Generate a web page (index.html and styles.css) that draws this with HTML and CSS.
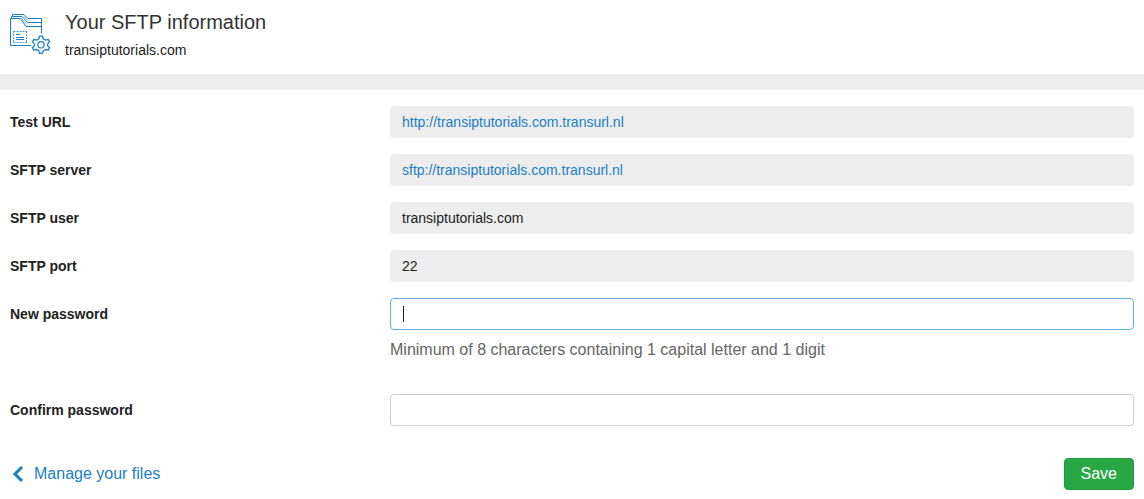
FILE: index.html
```html
<!doctype html>
<html lang="en">
  <head>
    <meta charset="UTF-8">
    <meta content="width=device-width, initial-scale=1.0" name="viewport">
    <title>Your SFTP information</title>
    <link rel="stylesheet" href="styles.css">
  </head>
  <body>
    <header class="page-header">
      <svg class="page-icon" viewBox="0 0 42 42" fill="none" stroke="#1b7fc4" aria-hidden="true">
        <path d="M22 33.500H1.500V6.500H11.500L17 14.500H32.500V21.500"/>
        <path d="M2.500 6V4.500H13L18.500 10.500H32.500"/>
        <path d="M3.500 4V2.500H15L19 6.500H32.500V14.500"/>
        <path d="M12 6L18 12.500M14 3.500L19 8.500" stroke-opacity=".6"/>
        <path d="M4.500 19.500H18M4.500 30.500H18M4.500 19V31M17.500 19V31" stroke-dasharray="2 1" stroke-opacity=".8"/>
        <path d="M7 22.500H11M7 25.500H15M7 27.500H15"/>
        <path d="M30.500 24.200h3l.8 2.800 2.200 1.100 2.700-.7 1.300 2.500-1.800 2v1.800l1.800 2-1.300 2.500-2.700-.7-2.200 1.100-.8 2.800h-3l-.8-2.800-2.200-1.100-2.700.7-1.300-2.500 1.800-2v-1.800l-1.800-2 1.300-2.500 2.700.7 2.200-1.100z" stroke-width="1.300" stroke-linejoin="round"/>
        <circle cx="32" cy="32.800" r="3.200" stroke-width="1.200"/>
      </svg>
      <div>
        <h1>Your SFTP information</h1>
        <p>transiptutorials.com</p>
      </div>
    </header>
    <main>
      <form>
        <dl class="details">
          <div class="row">
            <dt>Test URL</dt>
            <dd><a href="http://transiptutorials.com.transurl.nl">http://transiptutorials.com.transurl.nl</a></dd>
          </div>
          <div class="row">
            <dt>SFTP server</dt>
            <dd><a href="sftp://transiptutorials.com.transurl.nl">sftp://transiptutorials.com.transurl.nl</a></dd>
          </div>
          <div class="row">
            <dt>SFTP user</dt>
            <dd>transiptutorials.com</dd>
          </div>
          <div class="row">
            <dt>SFTP port</dt>
            <dd>22</dd>
          </div>
        </dl>
        <div class="row row-help">
          <label for="new-password">New password</label>
          <div>
            <input type="password" id="new-password" name="new-password" placeholder=" " aria-describedby="password-help" autofocus>
            <p class="help" id="password-help">Minimum of 8 characters containing 1 capital letter and 1 digit</p>
          </div>
        </div>
        <div class="row">
          <label for="confirm-password">Confirm password</label>
          <input type="password" id="confirm-password" name="confirm-password" placeholder=" ">
        </div>
        <div class="actions">
          <a class="back" href="#">
            <svg viewBox="0 0 16 16" fill="none" stroke="currentColor" stroke-width="3" aria-hidden="true">
              <path d="M12 1L5 8l7 7"/>
            </svg>
            Manage your files
          </a>
          <button type="submit">Save</button>
        </div>
      </form>
    </main>
  </body>
</html>
```
FILE: styles.css
```css
* {
  box-sizing: border-box
}
body {
  background-color: #fff;
  color: #222;
  font-family: "Liberation Sans", Arial, sans-serif;
  font-size: 14px;
  margin: 0
}
a {
  color: #1b7fc4;
  text-decoration: none
}
a:hover {
  text-decoration: underline
}
.page-header {
  border-bottom: 16px solid #ededed;
  display: flex;
  gap: 14px;
  padding: 8px 9px 10px
}
.page-icon {
  height: 42px;
  margin-top: 4px;
  width: 42px
}
.page-header h1 {
  color: #333;
  font-size: 20px;
  font-weight: normal;
  line-height: 28px;
  margin: 0
}
.page-header p {
  line-height: 28px;
  margin: 0
}
main {
  padding: 16px 10px 8px
}
form, .details {
  display: grid;
  gap: 16px;
  margin: 0
}
.row {
  display: grid;
  gap: 8px;
  grid-template-columns: 1fr 2fr;
  line-height: 32px
}
.row-help {
  margin-bottom: 16px
}
dt, label {
  font-weight: bold
}
dd {
  background-color: #ededed;
  border-radius: 4px;
  margin: 0;
  padding: 0 12px
}
input {
  background-color: #fff;
  border: 1px solid #ccc;
  border-radius: 4px;
  color: #222;
  display: block;
  font: inherit;
  font-size: 16px;
  height: 32px;
  padding: 0 12px;
  width: 100%
}
input:focus {
  border-color: #62aee6;
  outline: 0
}
/* steady caret while the field is empty */
input:focus:placeholder-shown {
  background: #fff linear-gradient(#222, #222) 12px center / 1px 16px no-repeat;
  caret-color: transparent
}
.help {
  color: #666;
  font-size: 16px;
  line-height: 24px;
  margin: 8px 0 0
}
.actions {
  align-items: center;
  display: flex;
  font-size: 16px;
  justify-content: space-between;
  margin-top: 16px
}
.back {
  align-items: center;
  display: flex;
  gap: 8px
}
.back svg {
  height: 16px;
  width: 16px
}
button {
  background-color: #28a745;
  border: 1px solid #239a3e;
  border-radius: 4px;
  color: #fff;
  cursor: pointer;
  font: inherit;
  height: 32px;
  padding: 0 16px
}
```
